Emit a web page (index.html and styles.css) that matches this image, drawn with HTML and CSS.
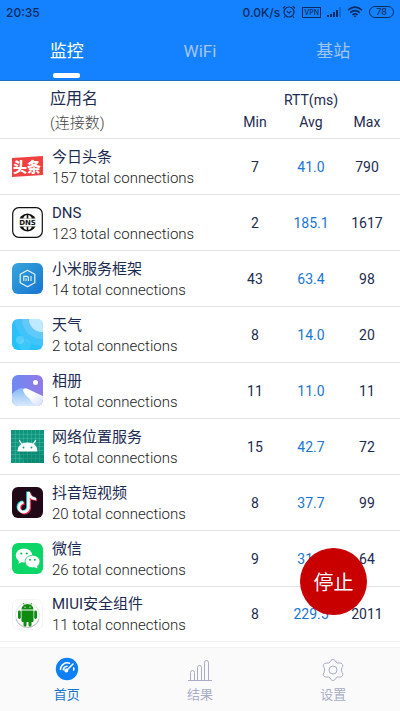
FILE: index.html
```html
<!DOCTYPE html>
<html lang="zh-CN">
<head>
    <meta charset="UTF-8">
    <meta name="viewport" content="width=device-width, initial-scale=1.0">
    <title>监控</title>
    <link rel="stylesheet" href="styles.css">
</head>
<body>
    <header>
        <div class="status-bar">
            <span class="time">20:35</span>
            <div class="status-icons">
                <span class="speed">0.0K/s</span>
                <svg class="alarm" width="14" height="14" viewBox="0 0 14 14" fill="none" stroke="currentColor" stroke-width="1.2">
                    <circle cx="7" cy="7" r="5"/>
                    <path d="M4.8 6.2L7 8L9.2 6.2M1 3.2L3.2 1.2M13 3.2L10.8 1.2M3 11.5L2 12.8M11 11.5L12 12.8"/>
                </svg>
                <span class="vpn">VPN</span>
                <svg class="signal" width="14" height="12" viewBox="0 0 14 12" fill="currentColor">
                    <path d="M0 9h2v2H0zM3 8h2v3H3zM6 6h2v5H6zM9 4h2v7H9z"/>
                    <path d="M12 1h2v10h-2z" opacity="0.3"/>
                </svg>
                <svg class="wifi" width="16" height="12" viewBox="0 0 16 12" fill="none" stroke="currentColor" stroke-width="1.7">
                    <path d="M1 4.2Q8 -1.8 15 4.2M3.2 6.6Q8 2.6 12.8 6.6M5.4 8.8Q8 6.8 10.6 8.8"/>
                    <path d="M6.5 10L8 11.8L9.5 10Q8 9 6.5 10z" fill="currentColor" stroke="none"/>
                </svg>
                <span class="battery">78</span>
            </div>
        </div>
        <nav class="tabs">
            <a href="#monitor" class="active">监控</a>
            <a href="#wifi">WiFi</a>
            <a href="#cell">基站</a>
        </nav>
    </header>

    <main>
        <table>
            <colgroup>
                <col>
                <col class="num-col">
                <col class="num-col">
                <col class="last-col">
            </colgroup>
            <thead>
                <tr class="head-top">
                    <th rowspan="2" class="head-name">应用名<span>(连接数)</span></th>
                    <th colspan="3">RTT(ms)</th>
                </tr>
                <tr class="head-bottom">
                    <th>Min</th>
                    <th>Avg</th>
                    <th>Max</th>
                </tr>
            </thead>
            <tbody>
                <tr>
                    <td>
                        <div class="app">
                            <svg width="33" height="33" viewBox="0 0 33 33">
                                <path d="M1 8L32 6V25L1 27z" fill="#f04142"/>
                                <text x="16" y="22" class="toutiao" text-anchor="middle">头条</text>
                            </svg>
                            <div class="app-text"><h2>今日头条</h2><p>157 total connections</p></div>
                        </div>
                    </td>
                    <td>7</td>
                    <td class="avg">41.0</td>
                    <td>790</td>
                </tr>
                <tr>
                    <td>
                        <div class="app">
                            <svg width="33" height="33" viewBox="0 0 33 33">
                                <rect x="1.7" y="1.7" width="29.6" height="29.6" rx="6" fill="#fff" stroke="#111" stroke-width="1.2"/>
                                <circle cx="16.5" cy="16.5" r="9" fill="#111"/>
                                <path d="M15.700 9Q12.500 10 12.300 12.500H15.700zM17.300 9Q20.500 10 20.700 12.500H17.300zM15.700 24Q12.500 23 12.300 20.500H15.700zM17.300 24Q20.500 23 20.700 20.500H17.300z" fill="#fff"/>
                                <path d="M6 12.500h21v8H6z" fill="#fff"/>
                                <text x="16.5" y="19" class="dns" text-anchor="middle">DNS</text>
                            </svg>
                            <div class="app-text"><h2>DNS</h2><p>123 total connections</p></div>
                        </div>
                    </td>
                    <td>2</td>
                    <td class="avg">185.1</td>
                    <td>1617</td>
                </tr>
                <tr>
                    <td>
                        <div class="app">
                            <svg width="33" height="33" viewBox="0 0 33 33">
                                <linearGradient id="mi" x1="0" y1="0" x2="1" y2="1">
                                    <stop offset="0" stop-color="#37a6dc"/>
                                    <stop offset="1" stop-color="#1674cf"/>
                                </linearGradient>
                                <rect x="1" y="1" width="31" height="31" rx="6" fill="url(#mi)"/>
                                <path d="M16.5 8.2L23.8 12.3V20.7L16.5 24.8L9.2 20.7V12.3z" fill="none" stroke="#e8f5fc" stroke-width="1.2" stroke-linejoin="round"/>
                                <path d="M12.8 19V14.4H16Q17.4 14.4 17.4 15.8V19M15.1 16.2V19M20 14V19" fill="none" stroke="#e8f5fc" stroke-width="1.1"/>
                            </svg>
                            <div class="app-text"><h2>小米服务框架</h2><p>14 total connections</p></div>
                        </div>
                    </td>
                    <td>43</td>
                    <td class="avg">63.4</td>
                    <td>98</td>
                </tr>
                <tr>
                    <td>
                        <div class="app">
                            <svg width="33" height="33" viewBox="0 0 33 33">
                                <linearGradient id="sky" x1="1" y1="0" x2="0.3" y2="1">
                                    <stop offset="0" stop-color="#49b6f8"/>
                                    <stop offset="1" stop-color="#1fc4fa"/>
                                </linearGradient>
                                <clipPath id="tile"><rect x="1" y="1" width="31" height="31" rx="6"/></clipPath>
                                <g clip-path="url(#tile)">
                                    <rect x="1" y="1" width="31" height="31" fill="url(#sky)"/>
                                    <circle cx="31" cy="1" r="27" fill="#fff" opacity="0.08"/>
                                    <circle cx="31" cy="1" r="20" fill="#fff" opacity="0.14"/>
                                    <circle cx="31" cy="1" r="13" fill="#cfeeff" opacity="0.85"/>
                                    <circle cx="9" cy="22" r="4" fill="#fff" opacity="0.2"/>
                                    <circle cx="14" cy="27" r="6" fill="#fff" opacity="0.1"/>
                                </g>
                            </svg>
                            <div class="app-text"><h2>天气</h2><p>2 total connections</p></div>
                        </div>
                    </td>
                    <td>8</td>
                    <td class="avg">14.0</td>
                    <td>20</td>
                </tr>
                <tr>
                    <td>
                        <div class="app">
                            <svg width="33" height="33" viewBox="0 0 33 33">
                                <linearGradient id="dusk" x1="0" y1="0" x2="1" y2="0">
                                    <stop offset="0" stop-color="#6d8af3"/>
                                    <stop offset="1" stop-color="#9279e6"/>
                                </linearGradient>
                                <linearGradient id="snow" x1="0" y1="0" x2="1" y2="1">
                                    <stop offset="0.4" stop-color="#fff"/>
                                    <stop offset="1" stop-color="#d3def8"/>
                                </linearGradient>
                                <linearGradient id="hill" x1="0" y1="0" x2="0" y2="1">
                                    <stop offset="0" stop-color="#86b9f5"/>
                                    <stop offset="1" stop-color="#d9eafc"/>
                                </linearGradient>
                                <g clip-path="url(#tile)">
                                    <rect x="1" y="1" width="31" height="31" fill="url(#dusk)"/>
                                    <path d="M1 20Q8 12 15 15L28 32H1z" fill="url(#hill)"/>
                                    <path d="M12 16Q13 13 17 15Q25 19 32 22V32H27Q20 29 19 25Q13 21 12 16z" fill="url(#snow)"/>
                                    <circle cx="24.5" cy="8.5" r="2.5" fill="#fff"/>
                                </g>
                            </svg>
                            <div class="app-text"><h2>相册</h2><p>1 total connections</p></div>
                        </div>
                    </td>
                    <td>11</td>
                    <td class="avg">11.0</td>
                    <td>11</td>
                </tr>
                <tr>
                    <td>
                        <div class="app">
                            <svg width="33" height="33" viewBox="0 0 33 33">
                                <rect width="33" height="33" fill="#0d967d"/>
                                <path d="M4.5 0V33M8.5 0V33M12.5 0V33M16.5 0V33M20.5 0V33M24.5 0V33M28.5 0V33M0 4.5H33M0 8.5H33M0 12.5H33M0 16.5H33M0 20.5H33M0 24.5H33M0 28.5H33" stroke="#4bb8a3" stroke-width="0.5"/>
                                <path d="M7 21L14 33H33V26L26 19z" fill="#087563" opacity="0.4"/>
                                <path d="M6.500 21.500Q7 12.500 16.500 12.500T26.500 21.500z" fill="#fff"/>
                                <path d="M11 14.500L8.500 10.500M22 14.500L24.500 10.500" stroke="#fff" stroke-width="1.2" stroke-linecap="round"/>
                                <circle cx="12.500" cy="17.500" r="0.9" fill="#0d967d"/>
                                <circle cx="20.500" cy="17.500" r="0.9" fill="#0d967d"/>
                            </svg>
                            <div class="app-text"><h2>网络位置服务</h2><p>6 total connections</p></div>
                        </div>
                    </td>
                    <td>15</td>
                    <td class="avg">42.7</td>
                    <td>72</td>
                </tr>
                <tr>
                    <td>
                        <div class="app">
                            <svg width="33" height="33" viewBox="0 0 33 33" fill="none" stroke-width="3">
                                <rect x="1" y="1" width="31" height="31" rx="6" fill="#210a18"/>
                                <path d="M17.500 6V21A4.800 4.800 0 1 1 12.500 16.500M17.500 6Q18.500 12.500 25 13" stroke="#25e3df" transform="translate(-0.8 -0.5)"/>
                                <path d="M17.500 6V21A4.800 4.800 0 1 1 12.500 16.500M17.500 6Q18.500 12.500 25 13" stroke="#f5315c" transform="translate(1 0.8)"/>
                                <path d="M17.500 6V21A4.800 4.800 0 1 1 12.500 16.500M17.500 6Q18.500 12.500 25 13" stroke="#fff" stroke-width="2.600"/>
                            </svg>
                            <div class="app-text"><h2>抖音短视频</h2><p>20 total connections</p></div>
                        </div>
                    </td>
                    <td>8</td>
                    <td class="avg">37.7</td>
                    <td>99</td>
                </tr>
                <tr>
                    <td>
                        <div class="app">
                            <svg width="33" height="33" viewBox="0 0 33 33">
                                <rect x="1" y="1" width="31" height="31" rx="6" fill="#0bd566"/>
                                <path d="M8 18L7.500 22L11.500 19.500z" fill="#fff"/>
                                <ellipse cx="13" cy="13.500" rx="8.200" ry="7" fill="#fff"/>
                                <ellipse cx="21.500" cy="19.500" rx="7.500" ry="6.300" fill="#fff" stroke="#0bd566" stroke-width="0.8"/>
                                <path d="M23 25L26.500 26.500L26 23z" fill="#fff"/>
                                <g fill="#0bb659">
                                    <circle cx="10.300" cy="11.500" r="1.100"/>
                                    <circle cx="15.800" cy="11.500" r="1.100"/>
                                    <circle cx="19" cy="17.800" r="1"/>
                                    <circle cx="23.800" cy="17.800" r="1"/>
                                </g>
                            </svg>
                            <div class="app-text"><h2>微信</h2><p>26 total connections</p></div>
                        </div>
                    </td>
                    <td>9</td>
                    <td class="avg">31.5</td>
                    <td>64</td>
                </tr>
                <tr>
                    <td>
                        <div class="app">
                            <svg width="33" height="33" viewBox="0 0 33 33">
                                <rect x="1.500" y="1.500" width="30" height="30" rx="6" fill="#fff" stroke="#f4f4f4"/>
                                <circle cx="16.500" cy="17" r="12" fill="#fff" stroke="#e4e4e4"/>
                                <path d="M5 21A12 12 0 0 0 28 21" fill="none" stroke="#bbb"/>
                                <g fill="#118a11">
                                    <path d="M10.500 11.500A6 5.500 0 0 1 22.500 11.500z"/>
                                    <path d="M10.500 12.500H22.500V23Q22.500 24 21.500 24H11.500Q10.500 24 10.500 23z"/>
                                    <rect x="7" y="12.500" width="2.800" height="8.500" rx="1.400"/>
                                    <rect x="23.200" y="12.500" width="2.800" height="8.500" rx="1.400"/>
                                    <rect x="12.500" y="20" width="3" height="8.500" rx="1.500"/>
                                    <rect x="17.500" y="20" width="3" height="8.500" rx="1.500"/>
                                </g>
                                <path d="M13.500 7.500L12.300 5M19.500 7.500L20.700 5" stroke="#118a11" stroke-width="0.7"/>
                                <circle cx="14" cy="9.200" r="0.6" fill="#fff"/>
                                <circle cx="19" cy="9.200" r="0.6" fill="#fff"/>
                            </svg>
                            <div class="app-text"><h2>MIUI安全组件</h2><p>11 total connections</p></div>
                        </div>
                    </td>
                    <td>8</td>
                    <td class="avg">229.5</td>
                    <td>2011</td>
                </tr>
            </tbody>
        </table>
    </main>

    <button type="button" class="stop">停止</button>

    <nav class="bottom-nav">
        <a href="#home" class="active">
            <svg width="24" height="24" viewBox="0 0 24 24" fill="none" stroke="#fff" stroke-width="1.600" stroke-linecap="round">
                <circle cx="12" cy="12" r="11.200" fill="#0d80f5" stroke="none"/>
                <path d="M5.500 12.500A6.800 6.800 0 0 1 14.500 6.200M8.300 12.800A4 4 0 0 1 12 9.200M18.700 11Q19 12 18.600 13"/>
                <path d="M11.500 13.500L18 7" stroke-width="1.500"/>
                <circle cx="11.300" cy="13.600" r="2" fill="#fff" stroke="none"/>
            </svg>
            首页
        </a>
        <a href="#results">
            <svg width="24" height="24" viewBox="0 0 24 24" fill="none" stroke="currentColor">
                <path d="M0 23.500H24M2.500 23V15.500Q2.500 13.500 4.500 13.500T6.500 15.500V23M9.500 23V10.500Q9.500 8.500 11.500 8.500T13.500 10.500V23M16.500 23V5.500Q16.500 3.500 18.500 3.500T20.500 5.500V23"/>
            </svg>
            结果
        </a>
        <a href="#settings">
            <svg width="24" height="24" viewBox="0 0 24 24" fill="none" stroke="currentColor" stroke-linejoin="round">
                <path d="M9 5Q10 2.500 12 2.500T15 5Q16 6.500 18 6Q20.500 5.500 21.500 7.500T21 10.500Q19.500 13 21 15.500Q22.500 17 21.500 18.800T18 20Q16 19.500 15 21Q14 23.500 12 23.500T9 21Q8 19.500 6 20Q3.500 20.500 2.500 18.800T3 15.500Q4.500 13 3 10.500Q1.500 9 2.500 7.500T6 6Q8 6.500 9 5z"/>
                <circle cx="12" cy="13" r="4"/>
            </svg>
            设置
        </a>
    </nav>
</body>
</html>
```

FILE: styles.css
```css
* {
    box-sizing: border-box;
}

body {
    display: flex;
    flex-direction: column;
    height: 100vh;
    margin: 0;
    font-family: Roboto, "Noto Sans CJK SC", sans-serif;
    color: #1c2b50;
    background-color: #fff;
}

a {
    text-decoration: none;
}

header {
    flex: none;
    background-color: #1482ff;
    border-bottom: 1px solid #1f6dc4;
}

.status-bar {
    display: flex;
    justify-content: space-between;
    align-items: center;
    height: 24px;
    padding: 0 6px;
    color: #0b2b60;
    font-family: Inter, sans-serif;
    font-size: 12px;
    font-weight: 500;
}

.status-icons {
    display: flex;
    align-items: center;
    gap: 6px;
}

.speed {
    margin-right: -4px;
}

.vpn {
    padding: 0 1px;
    border: 1px solid #0b2b60;
    font-size: 7px;
    line-height: 9px;
}

.battery {
    width: 25px;
    border: 1px solid #0b2b60;
    border-radius: 6px;
    font-size: 9px;
    line-height: 10px;
    text-align: center;
}

.tabs {
    display: flex;
    height: 56px;
}

.tabs a {
    flex: 1;
    display: flex;
    flex-direction: column;
    align-items: center;
    padding-top: 15px;
    color: #a3c5f0;
    font-size: 17px;
    line-height: 24px;
}

.tabs .active {
    color: #fff;
}

.tabs .active::after {
    content: "";
    width: 27px;
    height: 5px;
    margin-top: 10px;
    border-radius: 2px;
    background-color: #fff;
}

main {
    flex: 1;
    min-height: 0;
    overflow: hidden;
}

table {
    width: 100%;
    border-spacing: 0;
    table-layout: fixed;
}

.num-col {
    width: 56px;
}

.last-col {
    width: 61px;
}

th,
td {
    padding: 0;
    font-size: 14px;
    font-weight: normal;
    text-align: center;
}

th:last-child,
td:last-child {
    padding-right: 5px;
}

.head-top {
    height: 30px;
}

.head-top th {
    padding-top: 8px;
}

.head-bottom {
    height: 27px;
}

.head-bottom th {
    padding-bottom: 6px;
}

.head-top .head-name {
    padding: 6px 0 0 50px;
    text-align: left;
    font-size: 16px;
    line-height: 24px;
    vertical-align: top;
}

.head-name span {
    display: block;
    color: #444;
    font-size: 15px;
    font-weight: 300;
}

td {
    height: 56px;
    border-top: 1px solid #e4e4e4;
}

tbody tr:last-child td {
    border-bottom: 1px solid #f0f0f0;
}

.avg {
    color: #1976d2;
}

.app {
    display: flex;
    align-items: center;
    gap: 8px;
    padding-left: 11px;
    text-align: left;
    white-space: nowrap;
}

.app svg {
    flex: none;
}

.app-text {
    padding-top: 2px;
    line-height: 21px;
}

.app-text h2 {
    margin: 0;
    font-size: 15px;
    font-weight: normal;
}

.app-text p {
    margin: 0;
    color: #222;
    font-size: 15px;
    font-weight: 300;
}

.toutiao {
    fill: #fff;
    font-size: 14px;
    font-weight: 900;
}

.dns {
    fill: #111;
    font-family: "DejaVu Sans", sans-serif;
    font-size: 7px;
    font-weight: bold;
}

.stop {
    position: absolute;
    right: 33px;
    bottom: 96px;
    width: 67px;
    height: 67px;
    padding: 0;
    border: none;
    border-radius: 50%;
    background-color: #c80000;
    color: #fff;
    font-family: inherit;
    font-size: 20px;
    cursor: pointer;
}

.bottom-nav {
    flex: none;
    display: flex;
    height: 64px;
    border-top: 1px solid #f0f0f0;
    background-color: #fafafa;
}

.bottom-nav a {
    flex: 1;
    display: flex;
    flex-direction: column;
    align-items: center;
    gap: 4px;
    padding-top: 9px;
    color: #a9adc6;
    font-size: 13px;
    line-height: 20px;
}

.bottom-nav .active {
    color: #1976d2;
}
```
